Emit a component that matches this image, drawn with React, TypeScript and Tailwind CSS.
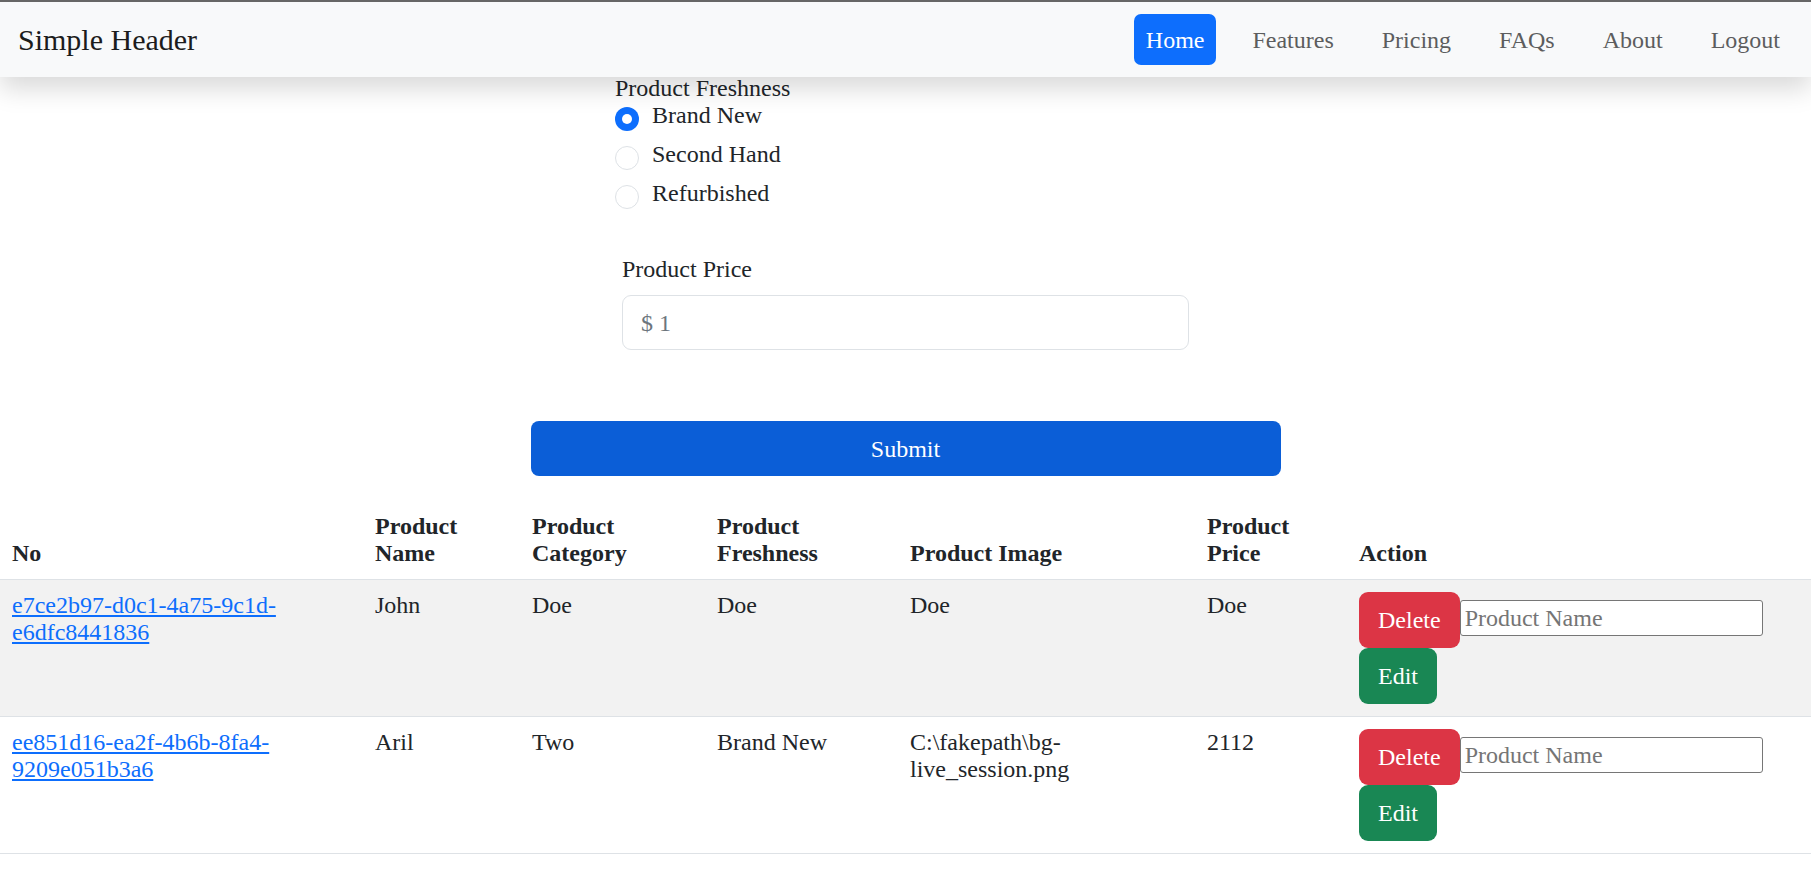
import { useState } from 'react';

type Product = {
  id: string;
  name: string;
  category: string;
  freshness: string;
  image: string;
  price: string;
};

const products: Product[] = [
  { id: 'e7ce2b97-d0c1-4a75-9c1d-e6dfc8441836', name: 'John', category: 'Doe', freshness: 'Doe', image: 'Doe', price: 'Doe' },
  { id: 'ee851d16-ea2f-4b6b-8fa4-9209e051b3a6', name: 'Aril', category: 'Two', freshness: 'Brand New', image: 'C:\\fakepath\\bg-live_session.png', price: '2112' },
];

const navItems = ['Home', 'Features', 'Pricing', 'FAQs', 'About', 'Logout'];
const freshnessOptions = ['Brand New', 'Second Hand', 'Refurbished'];

function Header() {
  return (
    <header className="relative z-10 flex h-[77px] items-center justify-between border-t-2 border-[#666] bg-[#f8f9fa] pl-[18px] pr-[19px] shadow-[0_12px_24px_rgba(0,0,0,0.15)]">
      <span className="text-[30px] text-[#1c1c1c]">Simple Header</span>
      <nav className="flex items-center gap-[24px]">
        {navItems.map((item) => (
          <a
            key={item}
            href="#"
            className={`flex h-[51px] items-center rounded-[7px] px-3 text-[24px] ${
              item === 'Home' ? 'bg-[#0d6efd] text-white' : 'text-[#5c5d5e]'
            }`}
          >
            {item}
          </a>
        ))}
      </nav>
    </header>
  );
}

export default function App() {
  const [freshness, setFreshness] = useState('Brand New');

  return (
    <div className="min-h-screen bg-white font-['Liberation_Serif',serif] text-[24px] text-[#212529]">
      <Header />

      {/* Form */}
      <div className="mx-auto w-[591px]">
        <div className="pl-[5px]">
          <p className="leading-[22px]">Product Freshness</p>
          <div className="mt-[4px]">
            {freshnessOptions.map((opt) => (
              <label key={opt} className="flex h-[39px] cursor-pointer items-start gap-[13px]" onClick={() => setFreshness(opt)}>
                {freshness === opt ? (
                  <span className="mt-[4px] flex size-[24px] items-center justify-center rounded-full bg-[#0d6efd]">
                    <span className="size-[10px] rounded-full bg-white" />
                  </span>
                ) : (
                  <span className="mt-[4px] size-[24px] rounded-full border border-[#dee2e6] bg-white" />
                )}
                <span className="leading-[24px]">{opt}</span>
              </label>
            ))}
          </div>
        </div>

        <div className="mt-[37px] px-3">
          <p className="leading-[24px]">Product Price</p>
          <div className="mt-[14px] flex h-[55px] items-center rounded-[9px] border border-[#dee2e6] px-[18px] text-[#6c757d]">
            $ 1
          </div>
        </div>
      </div>

      <div className="mx-auto mt-[71px] w-[750px]">
        <button className="h-[55px] w-full rounded-[8px] bg-[#0b5ed7] text-white">Submit</button>
      </div>

      {/* Table */}
      <table className="mt-[25px] w-full border-collapse text-left leading-[27px]">
        <thead>
          <tr className="border-b border-[#dee2e6]">
            <th className="w-[363px] p-3 align-bottom font-bold">No</th>
            <th className="w-[157px] p-3 align-bottom font-bold">Product Name</th>
            <th className="w-[185px] p-3 align-bottom font-bold">Product Category</th>
            <th className="w-[193px] p-3 align-bottom font-bold">Product Freshness</th>
            <th className="w-[297px] p-3 align-bottom font-bold">Product Image</th>
            <th className="w-[152px] p-3 align-bottom font-bold">Product Price</th>
            <th className="p-3 align-bottom font-bold">Action</th>
          </tr>
        </thead>
        <tbody>
          {products.map((p, i) => (
            <tr key={p.id} className={`border-b border-[#dee2e6] ${i % 2 === 0 ? 'bg-[#f2f2f2]' : 'bg-white'}`}>
              <td className="p-3 align-top">
                <a href="#" className="text-[#0d6efd] underline">{p.id}</a>
              </td>
              <td className="p-3 align-top">{p.name}</td>
              <td className="p-3 align-top">{p.category}</td>
              <td className="p-3 align-top">{p.freshness}</td>
              <td className="p-3 align-top">{p.image}</td>
              <td className="p-3 align-top">{p.price}</td>
              <td className="p-3 align-top">
                <div className="flex flex-wrap items-start">
                  <button className="h-[56px] rounded-[9px] bg-[#dc3545] px-[19px] text-white">Delete</button>
                  <input
                    placeholder="Product Name"
                    className="mt-[8px] h-[36px] w-[303px] rounded-[3px] border border-[#767676] bg-white px-[4px] placeholder:text-[#757575]"
                  />
                  <button className="h-[56px] rounded-[9px] bg-[#198754] px-[19px] text-white">Edit</button>
                </div>
              </td>
            </tr>
          ))}
        </tbody>
      </table>
    </div>
  );
}
